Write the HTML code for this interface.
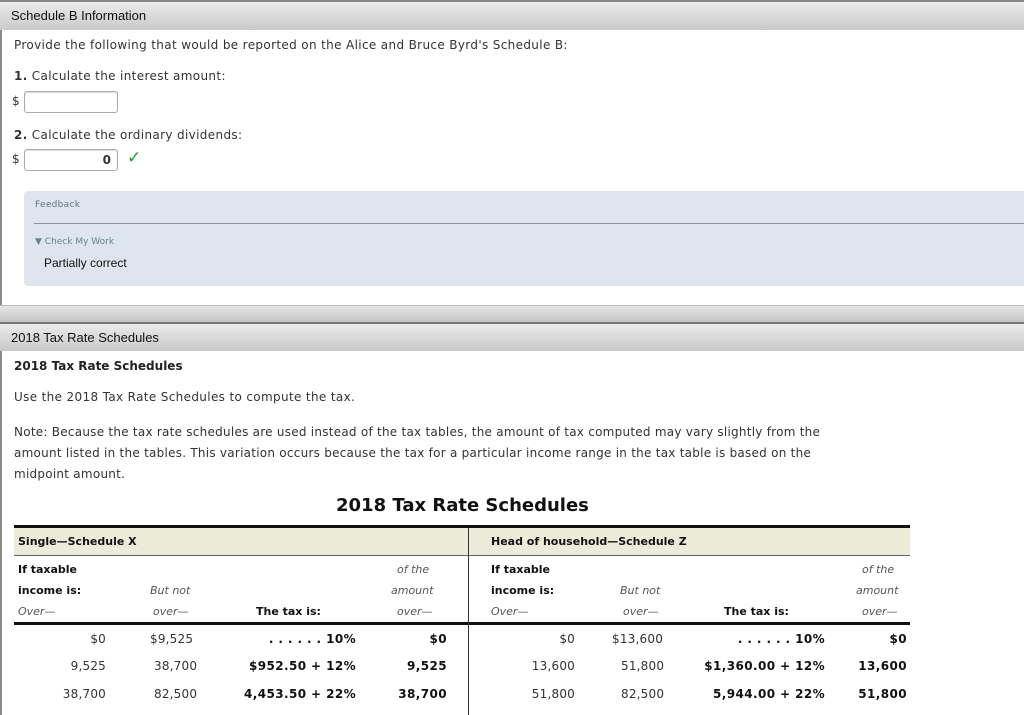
<!DOCTYPE html>
<html><head><meta charset="utf-8"><style>
body{margin:0;width:1024px;height:715px;overflow:hidden;background:#fff;position:relative;font-family:"DejaVu Sans","Liberation Sans",sans-serif;font-size:11px;color:#333}
.a{position:absolute;white-space:nowrap}
.p{font-size:12px;letter-spacing:0.35px}
.bar{position:absolute;left:0;width:1024px;background:linear-gradient(#ecebec,#c9c9c9)}
.hd{font-family:"Liberation Sans",sans-serif;font-size:13px;color:#111}
.inp{position:absolute;left:24px;width:92px;height:20px;border:1px solid #aaa;border-radius:3px;background:#fff;box-shadow:inset 0 1px 1px #ddd}
.t{position:absolute;font-size:11px;color:#333;white-space:nowrap}
.b{font-weight:bold;color:#111}
.i{font-style:italic;color:#555}
.r{text-align:right}
.d{font-size:12px;letter-spacing:0.2px;margin-top:-1px}
.d.b{letter-spacing:0.4px}
</style></head><body>
<div style="position:absolute;left:0;top:0;width:2px;height:715px;background:#8a8a8a"></div>
<div class="bar" style="top:0;height:2px;background:#8a8a8a"></div>
<div class="bar" style="top:2px;height:28px"></div>
<div class="a hd" style="left:11px;top:8px">Schedule B Information</div>
<div class="a p" style="left:14px;top:38px">Provide the following that would be reported on the Alice and Bruce Byrd's Schedule B:</div>
<div class="a p" style="left:14px;top:69px"><b>1.</b> Calculate the interest amount:</div>
<div class="a" style="left:12px;top:94px;font-size:12px">$</div>
<div class="inp" style="top:91px"></div>
<div class="a p" style="left:14px;top:128px"><b>2.</b> Calculate the ordinary dividends:</div>
<div class="a" style="left:12px;top:152px;font-size:12px">$</div>
<div class="inp" style="top:149px"><span style="position:absolute;right:6px;top:3px;font-weight:bold;color:#333;font-size:12px">0</span></div>
<div class="a" style="left:127px;top:148px;color:#2e9a2e;font-size:17px;font-weight:bold">✓</div>
<div style="position:absolute;left:24px;top:191px;width:1010px;height:95px;background:#dfe5ee;border-radius:4px"></div>
<div class="a" style="left:35px;top:200px;font-size:9px;color:#5a7a7a;letter-spacing:.3px">Feedback</div>
<div style="position:absolute;left:34px;top:223px;width:990px;height:1px;background:#8d9298"></div>
<div class="a" style="left:35px;top:237px;font-size:9px;color:#6a8585">▼ Check My Work</div>
<div class="a" style="left:44px;top:256px;font-family:'Liberation Sans',sans-serif;font-size:12px;color:#111">Partially correct</div>
<div style="position:absolute;left:0;top:305px;width:1024px;height:1px;background:#bbb"></div>
<div class="bar" style="top:306px;height:16px;background:linear-gradient(#e6e5e6,#c4c4c4)"></div>
<div class="bar" style="top:322px;height:2px;background:#777"></div>
<div class="bar" style="top:324px;height:27px"></div>
<div class="a hd" style="left:11px;top:330px">2018 Tax Rate Schedules</div>
<div class="a p" style="left:14px;top:359px;font-weight:bold;color:#222;letter-spacing:0px">2018 Tax Rate Schedules</div>
<div class="a p" style="left:14px;top:390px">Use the 2018 Tax Rate Schedules to compute the tax.</div>
<div class="a p" style="left:14px;top:422px;line-height:21px;letter-spacing:0.25px">Note: Because the tax rate schedules are used instead of the tax tables, the amount of tax computed may vary slightly from the<br>amount listed in the tables. This variation occurs because the tax for a particular income range in the tax table is based on the<br>midpoint amount.</div>
<div class="a" style="left:336px;top:495px;font-size:18px;font-weight:bold;color:#111">2018 Tax Rate Schedules</div>
<div style="position:absolute;left:14px;top:525px;width:896px;height:3px;background:#111"></div>
<div style="position:absolute;left:14px;top:528px;width:896px;height:27px;background:#ecebd9;border-bottom:1px solid #666"></div>
<div style="position:absolute;left:14px;top:622px;width:896px;height:3px;background:#111"></div>
<div style="position:absolute;left:468px;top:528px;width:1px;height:187px;background:#333"></div>

<div class="t b" style="left:18px;top:535px">Single—Schedule X</div>
<div class="t b" style="left:18px;top:563px">If taxable</div>
<div class="t b" style="left:18px;top:584px">income is:</div>
<div class="t i" style="left:18px;top:605px">Over—</div>
<div class="t i" style="left:150px;top:584px">But not</div>
<div class="t i" style="left:153px;top:605px">over—</div>
<div class="t b" style="left:256px;top:605px">The tax is:</div>
<div class="t i" style="left:397px;top:563px">of the</div>
<div class="t i" style="left:391px;top:584px">amount</div>
<div class="t i" style="left:397px;top:605px">over—</div>

<div class="t b" style="left:491px;top:535px">Head of household—Schedule Z</div>
<div class="t b" style="left:491px;top:563px">If taxable</div>
<div class="t b" style="left:491px;top:584px">income is:</div>
<div class="t i" style="left:491px;top:605px">Over—</div>
<div class="t i" style="left:620px;top:584px">But not</div>
<div class="t i" style="left:623px;top:605px">over—</div>
<div class="t b" style="left:724px;top:605px">The tax is:</div>
<div class="t i" style="left:862px;top:563px">of the</div>
<div class="t i" style="left:856px;top:584px">amount</div>
<div class="t i" style="left:862px;top:605px">over—</div>

<div class="t r d" style="left:40px;width:66px;top:633px">$0</div>
<div class="t d" style="left:150px;top:633px">$9,525</div>
<div class="t r b d" style="left:200px;width:156px;top:633px">. . . . . . 10%</div>
<div class="t r b d" style="left:360px;width:87px;top:633px">$0</div>
<div class="t r d" style="left:40px;width:66px;top:660px">9,525</div>
<div class="t d" style="left:154px;top:660px">38,700</div>
<div class="t r b d" style="left:200px;width:156px;top:660px">$952.50 + 12%</div>
<div class="t r b d" style="left:360px;width:87px;top:660px">9,525</div>
<div class="t r d" style="left:40px;width:66px;top:688px">38,700</div>
<div class="t d" style="left:154px;top:688px">82,500</div>
<div class="t r b d" style="left:200px;width:156px;top:688px">4,453.50 + 22%</div>
<div class="t r b d" style="left:360px;width:87px;top:688px">38,700</div>

<div class="t r d" style="left:500px;width:75px;top:633px">$0</div>
<div class="t d" style="left:612px;top:633px">$13,600</div>
<div class="t r b d" style="left:660px;width:165px;top:633px">. . . . . . 10%</div>
<div class="t r b d" style="left:820px;width:87px;top:633px">$0</div>
<div class="t r d" style="left:500px;width:75px;top:660px">13,600</div>
<div class="t d" style="left:621px;top:660px">51,800</div>
<div class="t r b d" style="left:660px;width:165px;top:660px">$1,360.00 + 12%</div>
<div class="t r b d" style="left:820px;width:87px;top:660px">13,600</div>
<div class="t r d" style="left:500px;width:75px;top:688px">51,800</div>
<div class="t d" style="left:621px;top:688px">82,500</div>
<div class="t r b d" style="left:660px;width:165px;top:688px">5,944.00 + 22%</div>
<div class="t r b d" style="left:820px;width:87px;top:688px">51,800</div>
</body></html>
